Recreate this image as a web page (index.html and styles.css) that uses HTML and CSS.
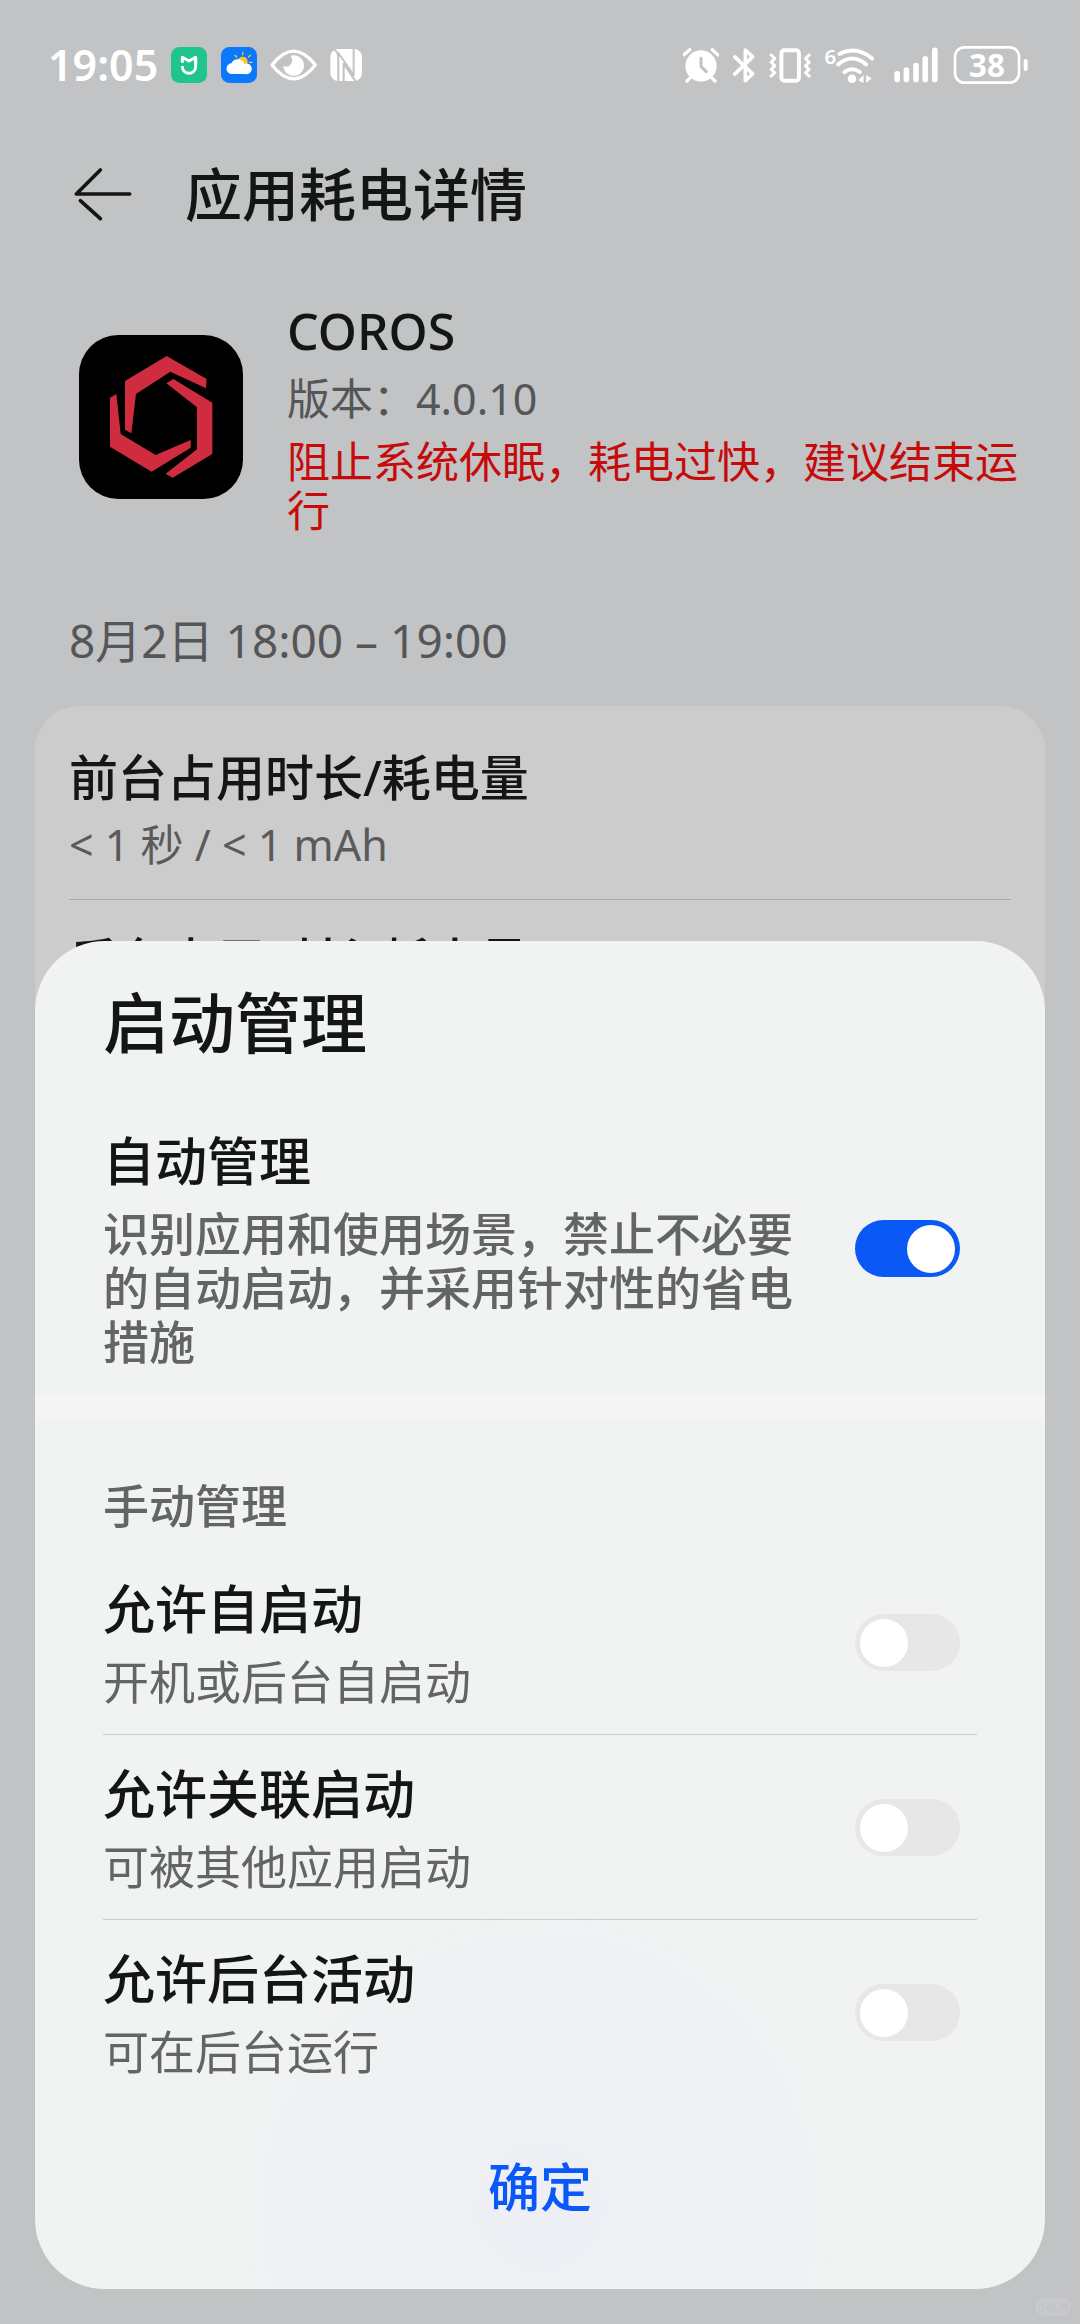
FILE: index.html
```html
<!DOCTYPE html>
<html lang="zh-CN">
<head>
<meta charset="utf-8">
<meta name="viewport" content="width=device-width, initial-scale=1">
<title>应用耗电详情</title>
<link rel="stylesheet" href="styles.css">
</head>
<body>
<div class="page">
  <header class="status">
    <div class="status-group status-left">
      <span class="clock">19:05</span>
      <svg width="38" height="38" viewBox="414 48 114 114" aria-hidden="true">
        <rect x="417" y="51" width="108" height="108" rx="25" fill="#1fc58a"/>
        <path d="M451 98V82L471 93L491 82V98" fill="none" stroke="#fff" stroke-width="9" stroke-linejoin="round"/>
        <path d="M451 108C451 137 491 137 491 108V94" fill="none" stroke="#fff" stroke-width="9"/>
      </svg>
      <svg width="38" height="38" viewBox="567 48 114 114" aria-hidden="true">
        <rect x="570" y="51" width="108" height="108" rx="25" fill="#0c78fb"/>
        <path d="M635 68V74M612 76L617 81M658 76L653 81M655 97H663M652 113L657 117" stroke="#ffc629" stroke-width="4" stroke-linecap="round"/>
        <circle cx="635" cy="95" r="15" fill="#ffc629"/>
        <path d="M604 132A16 16 0 0 1 601 100A21 21 0 0 1 640 102A16 16 0 1 1 642 132Z" fill="#fff"/>
      </svg>
      <svg width="47" height="34" viewBox="711 54 141 102" aria-hidden="true">
        <path d="M717 105Q782 22 847 105Q782 188 717 105Z" fill="none" stroke="#fff" stroke-width="10" stroke-linejoin="round"/>
        <path d="M773 77A31 31 0 1 1 751 108Q758 112 768 108Q784 96 773 77Z" fill="#fff"/>
      </svg>
      <svg width="34" height="34" viewBox="894 53 102 102" aria-hidden="true">
        <rect x="898" y="56" width="95" height="96" rx="24" fill="#fff"/>
        <path d="M908 58Q922 64 922 82V152M922 68L968 134V56M938 152V100L972 150" class="cut" stroke-width="6"/>
      </svg>
    </div>
    <div class="status-group status-right">
      <svg width="36" height="36" viewBox="42 50 108 108" aria-hidden="true">
        <circle cx="96" cy="107" r="47" fill="#fff"/>
        <path d="M45 73L62 58M130 58L147 74M62 144L54 152M130 144L138 152" class="line" stroke-width="10"/>
        <path d="M96 84V108L112 124" class="cut" stroke-width="9"/>
      </svg>
      <svg width="22" height="37" viewBox="197 48 66 112" aria-hidden="true">
        <path d="M202 78L256 129L234 150V57L256 78L202 130" class="line" stroke-width="11"/>
      </svg>
      <svg width="42" height="37" viewBox="306 48 126 112" aria-hidden="true">
        <rect x="343" y="58" width="53" height="92" rx="9" class="line" stroke-width="12"/>
        <path d="M312 72L323 83L312 94L323 105L312 116L323 126L312 136M427 72L416 83L427 94L416 105L427 116L416 126L427 136" class="line" stroke-width="9"/>
      </svg>
      <svg class="wifi" width="54" height="39" viewBox="468 42 162 118" aria-hidden="true">
        <text x="466" y="96" class="wifi-gen">6</text>
        <path d="M511 66Q563 40 610 80" class="line" stroke-width="12"/>
        <path d="M507 98Q549 62 592 98M526 121Q549 104 573 121" class="line" stroke-width="12"/>
        <circle cx="549" cy="141" r="13" fill="#fff"/>
        <path d="M568 146L584 130V154ZM592 130L608 140L592 154Z" fill="#fff"/>
      </svg>
      <svg width="46" height="37" viewBox="672 48 138 112" aria-hidden="true">
        <path d="M684 129V146M712 118V146M741 104V146M769 84V146M798 58V146" class="line" stroke-width="17"/>
      </svg>
      <svg width="76" height="40" viewBox="850 42 228 120" aria-label="电量 38%">
        <rect x="856" y="49" width="192" height="106" rx="28" class="line" stroke-width="8"/>
        <rect x="1062" y="84" width="12" height="36" rx="6" fill="#fff"/>
        <text x="952" y="137" class="battery-text">38</text>
      </svg>
    </div>
  </header>

  <div class="appbar">
    <button class="back" type="button" aria-label="返回">
      <svg width="60" height="56" viewBox="70 76 180 168" aria-hidden="true">
        <path d="M152 88L80 160H240M92 180L152 234" fill="none" stroke="#141515" stroke-width="11" stroke-linecap="round" stroke-linejoin="round"/>
      </svg>
    </button>
    <h1 class="appbar-title">应用耗电详情</h1>
  </div>

  <section class="app">
    <svg class="app-icon" width="164" height="164" viewBox="57 140 492 492" aria-hidden="true">
      <rect x="57" y="140" width="492" height="492" rx="118"/>
      <g fill="#cf2c3f">
        <path d="M320 203L440 272L438 300L331 250L228 317L214 435L195 424V278Z"/>
        <path d="M340 272L457 343V497L338 568L317 556L411 483V357L319 285Z"/>
        <path d="M150 328L169 317L182 437L287 500L392 455V478L275 550L150 475Z"/>
      </g>
    </svg>
    <div class="app-text">
      <h2 class="app-name">COROS</h2>
      <p class="app-version">版本：4.0.10</p>
      <p class="app-warning">阻止系统休眠，耗电过快，建议结束运行</p>
    </div>
  </section>

  <p class="period">8月2日 18:00 – 19:00</p>

  <section class="card">
    <div class="card-row">
      <h3 class="card-title">前台占用时长/耗电量</h3>
      <p class="card-sub">&lt; 1 秒 / &lt; 1 mAh</p>
    </div>
    <div class="card-row">
      <h3 class="card-title">后台占用时长/耗电量</h3>
    </div>
  </section>
</div>

<span class="watermark" aria-hidden="true">小红书</span>

<form class="sheet" role="dialog" aria-labelledby="sheet-title">
  <h2 class="sheet-title" id="sheet-title">启动管理</h2>
  <div class="auto">
    <label class="option" for="auto">
      <span class="option-text">
        <span class="option-title">自动管理</span>
        <span class="option-desc option-desc-strong">识别应用和使用场景，禁止不必要的自动启动，并采用针对性的省电措施</span>
      </span>
      <input class="switch" id="auto" type="checkbox" role="switch" checked>
    </label>
  </div>
  <div class="manual">
    <h3 class="manual-title">手动管理</h3>
    <label class="option option-row" for="self-start">
      <span class="option-text">
        <span class="option-title">允许自启动</span>
        <span class="option-desc">开机或后台自启动</span>
      </span>
      <input class="switch" id="self-start" type="checkbox" role="switch">
    </label>
    <label class="option option-row" for="linked-start">
      <span class="option-text">
        <span class="option-title">允许关联启动</span>
        <span class="option-desc">可被其他应用启动</span>
      </span>
      <input class="switch" id="linked-start" type="checkbox" role="switch">
    </label>
    <label class="option option-row" for="background">
      <span class="option-text">
        <span class="option-title">允许后台活动</span>
        <span class="option-desc">可在后台运行</span>
      </span>
      <input class="switch" id="background" type="checkbox" role="switch">
    </label>
  </div>
  <button class="confirm" type="button">确定</button>
</form>
</body>
</html>
```
FILE: styles.css
```css
* {
  box-sizing: border-box;
  margin: 0;
  padding: 0;
}

body {
  height: 100vh;
  overflow: hidden;
  background: #c2c3c5;
  color: #141515;
  font-family: "Noto Sans", "Noto Sans CJK SC", sans-serif;
}

svg {
  display: block;
  flex: none;
}

.page {
  display: flex;
  flex-direction: column;
}

/* Status bar */
.status {
  display: flex;
  justify-content: space-between;
  align-items: center;
  height: 130px;
  padding: 0 51px 0 48px;
  color: #fff;
}

.status-group {
  display: flex;
  align-items: center;
}

.status-left {
  gap: 12px;
}

.status-right {
  gap: 14px;
}

.clock {
  font-size: 43px;
  line-height: 56px;
  font-weight: 600;
}

.wifi {
  overflow: visible;
}

.line {
  fill: none;
  stroke: #fff;
  stroke-linecap: round;
  stroke-linejoin: round;
}

.cut {
  fill: none;
  stroke: #c2c3c5;
  stroke-linecap: round;
  stroke-linejoin: round;
}

.wifi-gen {
  fill: #fff;
  font-size: 62px;
  font-weight: 600;
}

.battery-text {
  fill: #fff;
  font-size: 94px;
  font-weight: 700;
  text-anchor: middle;
}

/* Title bar */
.appbar {
  display: flex;
  align-items: center;
  gap: 52px;
  height: 128px;
  padding: 0 73px;
}

.back {
  border: 0;
  background: none;
}

.appbar-title {
  font-size: 57px;
  line-height: 76px;
  font-weight: 500;
}

/* App summary */
.app {
  display: flex;
  align-items: center;
  gap: 44px;
  padding: 41px 56px 0 79px;
}

.app-text {
  flex: 1;
}

.app-name {
  font-size: 50px;
  line-height: 64px;
  font-weight: 500;
}

.app-version {
  margin-top: 8px;
  color: #555657;
  font-size: 43px;
  line-height: 56px;
}

.app-warning {
  margin-top: 10px;
  color: #c60b0b;
  font-size: 43px;
  line-height: 49px;
}

.period {
  padding: 75px 69px 36px;
  color: #555657;
  font-size: 46px;
  line-height: 60px;
}

/* Usage card */
.card {
  margin: 0 35px;
  padding: 11px 34px;
  border-radius: 44px;
  background: #ccc;
}

.card-row {
  min-height: 183px;
  padding: 30px 0 26px;
  border-bottom: 1px solid #aaa;
}

.card-row:last-child {
  border-bottom: 0;
}

.card-title {
  font-size: 49px;
  line-height: 60px;
  font-weight: 500;
}

.card-sub {
  margin-top: 10px;
  color: #5a5a5a;
  font-size: 43px;
  line-height: 56px;
}

/* Bottom sheet */
.sheet {
  position: fixed;
  right: 35px;
  bottom: 35px;
  left: 35px;
  display: flex;
  flex-direction: column;
  padding: 41px 0 64px;
  border-radius: 70px;
  background:
    radial-gradient(circle at 50% 94%, #edeff5 0, rgba(239, 240, 243, 0) 340px),
    #f1f2f2;
}

.sheet-title {
  padding: 0 68px;
  font-size: 66px;
  line-height: 80px;
  font-weight: 500;
}

.auto {
  margin-top: 67px;
  padding: 0 68px 28px;
  border-bottom: 22px solid #f5f5f5;
}

.option {
  display: flex;
  align-items: center;
  gap: 40px;
  padding-right: 17px;
}

.option-text {
  display: flex;
  flex: 1;
  flex-direction: column;
  gap: 13px;
}

.option-title {
  font-size: 52px;
  line-height: 64px;
  font-weight: 500;
}

.option-desc {
  color: #636464;
  font-size: 46px;
  line-height: 54px;
}

.option-desc-strong {
  font-weight: 500;
}

.manual {
  padding: 60px 68px 0;
}

.manual-title {
  margin-bottom: 18px;
  color: #636464;
  font-size: 46px;
  line-height: 54px;
  font-weight: 500;
}

.option-row {
  padding-top: 27px;
  padding-bottom: 26px;
  border-bottom: 1px solid #cdcfcf;
}

.option-row:last-child {
  border-bottom-color: transparent;
}

.switch {
  display: flex;
  flex: none;
  align-items: center;
  width: 105px;
  height: 57px;
  padding: 0 5px;
  border-radius: 29px;
  background: #e7e7e7;
  appearance: none;
}

.switch::before {
  width: 48px;
  height: 48px;
  border-radius: 50%;
  background: #fff;
  content: "";
}

.switch:checked {
  justify-content: flex-end;
  background: #0a59f7;
}

.confirm {
  align-self: center;
  margin-top: 44px;
  padding: 0 48px;
  border: 0;
  background: none;
  color: #0a59f7;
  font-family: inherit;
  font-size: 52px;
  line-height: 76px;
  font-weight: 500;
}

.watermark {
  position: fixed;
  right: 9px;
  bottom: 8px;
  padding: 0 3px;
  border-radius: 9px;
  background: #c8c9ca;
  color: #bebfc0;
  font-size: 10px;
  line-height: 18px;
}
```
